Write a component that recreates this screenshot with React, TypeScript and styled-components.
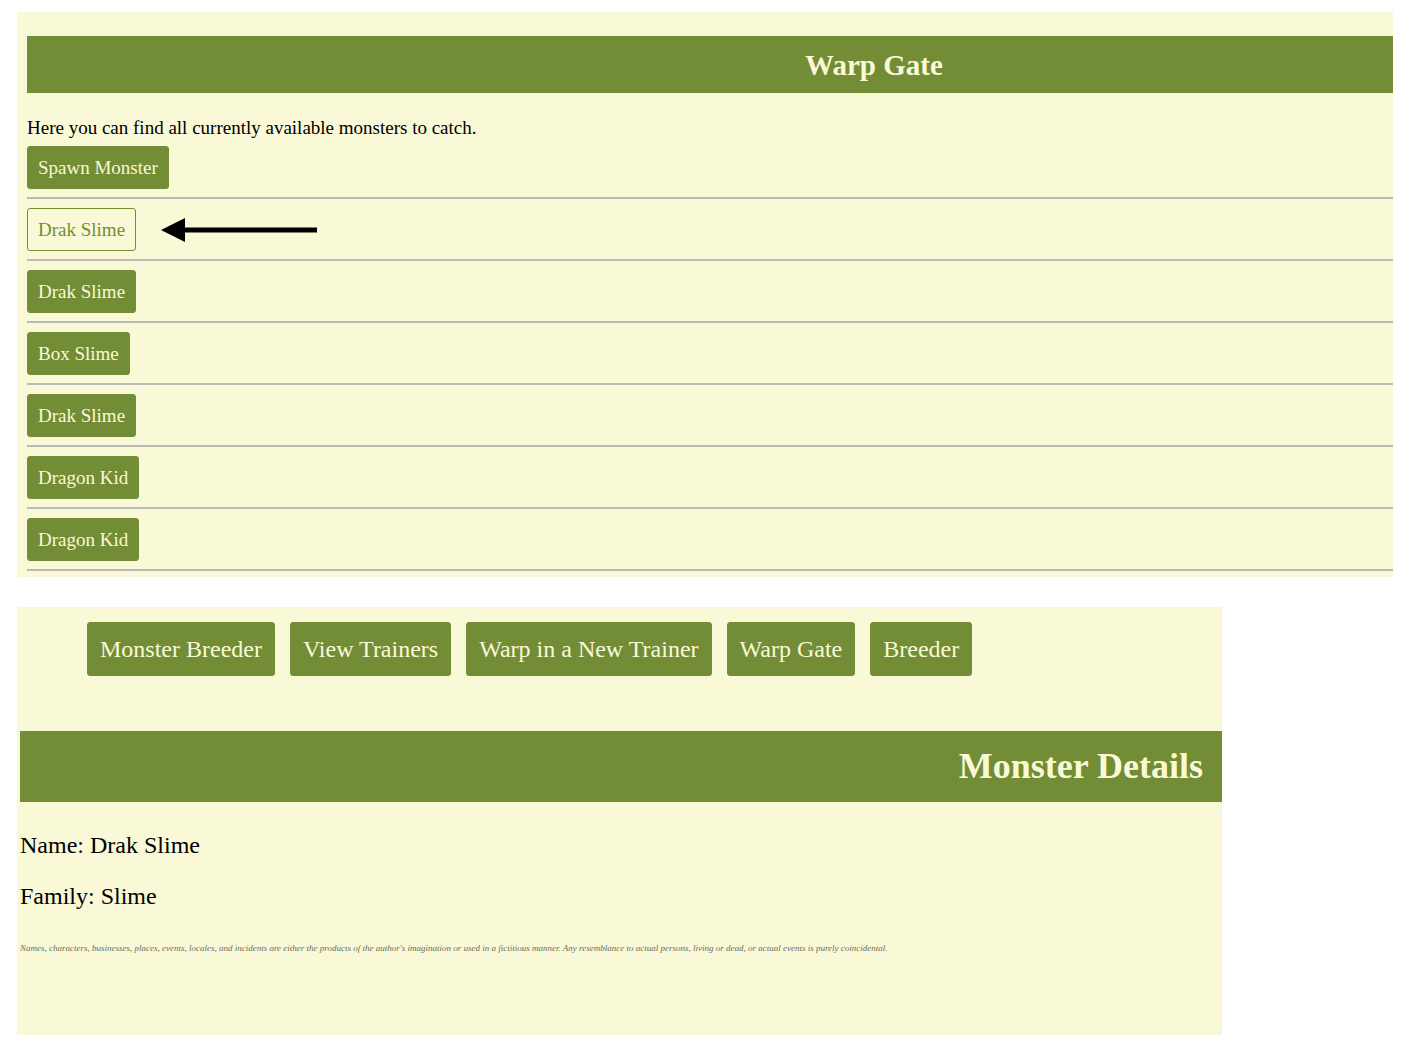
import React from "react";
import styled, { createGlobalStyle, css } from "styled-components";

const cream = "#faf9d7";
const green = "#728d35";

const GlobalStyle = createGlobalStyle`
  *, *::before, *::after { box-sizing: border-box; }
  body {
    margin: 0;
    background: #ffffff;
    color: #000000;
    font-family: "Liberation Serif", "Times New Roman", Times, serif;
  }
`;

const Page = styled.main`
  display: flex;
  flex-direction: column;
  gap: 30px;
  padding: 12px 29px 23px 17px;
`;

const Panel = styled.section`
  background: ${cream};
  overflow: hidden;
`;

const GatePanel = styled(Panel)`
  padding: 24px 0 6px 10px;
  font-size: 19px;
  line-height: 21px;
`;

const DetailsPanel = styled(Panel)`
  margin-right: 171px;
  padding: 15px 0 81px 3px;
  font-size: 24px;
  line-height: 28px;
`;

const GateTitle = styled.h1`
  margin: 0 0 24px;
  padding: 12px 0 11px 24%;
  background: ${green};
  color: ${cream};
  font-size: 29px;
  line-height: 34px;
  text-align: center;
`;

const DetailsTitle = styled.h1`
  margin: 55px 0 0;
  padding: 14px 19px 15px 0;
  background: ${green};
  color: ${cream};
  font-size: 36px;
  line-height: 42px;
  text-align: right;
`;

const Intro = styled.p`
  margin: 0 0 8px;
`;

const buttonLook = css`
  border: 1px solid ${green};
  border-radius: 3px;
  background: ${green};
  color: ${cream};
  font: inherit;
  white-space: nowrap;
  cursor: pointer;
`;

const MonsterButton = styled.button<{ $outlined?: boolean }>`
  ${buttonLook}
  padding: 10px;
  ${(p) =>
    p.$outlined &&
    css`
      background: ${cream};
      color: ${green};
    `}
`;

const MonsterList = styled.ul`
  margin: 0;
  padding: 0;
  list-style: none;
`;

const MonsterRow = styled.li`
  display: flex;
  align-items: center;
  gap: 25px;
  margin-bottom: 9px;
  padding-bottom: 8px;
  border-bottom: 2px solid #babab8;
  &:last-child {
    margin-bottom: 0;
  }
`;

const ArrowIcon = styled.svg`
  width: 156px;
  height: 24px;
  flex: none;
`;

const Nav = styled.nav`
  display: flex;
  gap: 15px;
  padding-left: 67px;
`;

const NavLink = styled.a`
  ${buttonLook}
  padding: 12px;
  text-decoration: none;
`;

const Facts = styled.div`
  display: flex;
  flex-direction: column;
  gap: 23px;
  margin-top: 29px;
`;

const Fact = styled.p`
  margin: 0;
`;

const Disclaimer = styled.footer`
  margin-top: 32px;
  color: #6c6c62;
  font-size: 9px;
  line-height: 12px;
  font-style: italic;
`;

const monsters = [
  { name: "Drak Slime", selected: true },
  { name: "Drak Slime" },
  { name: "Box Slime" },
  { name: "Drak Slime" },
  { name: "Dragon Kid" },
  { name: "Dragon Kid" },
];

const links = ["Monster Breeder", "View Trainers", "Warp in a New Trainer", "Warp Gate", "Breeder"];

export default function App() {
  return (
    <>
      <GlobalStyle />
      <Page>
        <GatePanel>
          <GateTitle>Warp Gate</GateTitle>
          <Intro>Here you can find all currently available monsters to catch.</Intro>
          <MonsterList>
            <MonsterRow>
              <MonsterButton type="button">Spawn Monster</MonsterButton>
            </MonsterRow>
            {monsters.map((monster, index) => (
              <MonsterRow key={index}>
                <MonsterButton type="button" $outlined={monster.selected}>
                  {monster.name}
                </MonsterButton>
                {monster.selected && (
                  <ArrowIcon viewBox="0 0 156 24" aria-hidden="true">
                    <path d="M0 12 24 0V9.5H156V14.5H24V24Z" fill="#000000" />
                  </ArrowIcon>
                )}
              </MonsterRow>
            ))}
          </MonsterList>
        </GatePanel>
        <DetailsPanel>
          <Nav>
            {links.map((label) => (
              <NavLink key={label} href="#">
                {label}
              </NavLink>
            ))}
          </Nav>
          <DetailsTitle>Monster Details</DetailsTitle>
          <Facts>
            <Fact>Name: Drak Slime</Fact>
            <Fact>Family: Slime</Fact>
          </Facts>
          <Disclaimer>
            Names, characters, businesses, places, events, locales, and incidents are either the products of the
            author's imagination or used in a fictitious manner. Any resemblance to actual persons, living or dead, or
            actual events is purely coincidental.
          </Disclaimer>
        </DetailsPanel>
      </Page>
    </>
  );
}
